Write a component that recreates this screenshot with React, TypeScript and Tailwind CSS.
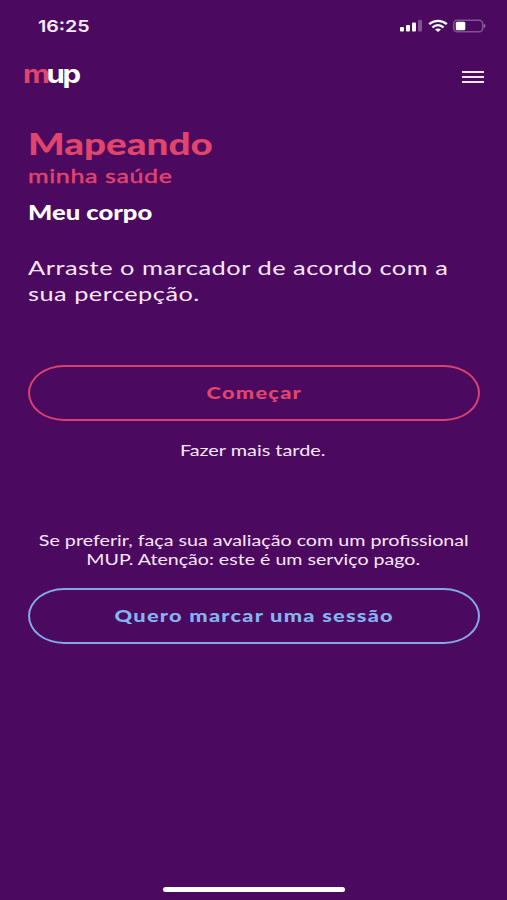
import type { ReactNode } from "react";
import clsx from "clsx";

type LineProps = { children: ReactNode; className?: string };

function Line({ children, className }: LineProps) {
  return <span className={clsx("block w-fit whitespace-nowrap", className)}>{children}</span>;
}

function StatusBar() {
  return (
    <div className="flex h-[52px] items-center justify-between pr-5 pl-[38px]">
      <Line className="origin-left scale-x-[1.19] font-['Inter'] text-[16.5px] font-semibold text-[#fbeafd]">16:25</Line>
      <svg width="88" height="14" viewBox="0 0 88 14">
        {/* sinal */}
        <g fill="#fff">
          <rect x="1" y="8" width="4" height="4.5" rx="1" />
          <rect x="7" y="6" width="4" height="6.5" rx="1" />
          <rect x="13" y="3.5" width="4" height="9" rx="1" />
          <rect x="19" y="1" width="4" height="11.5" rx="1" opacity="0.3" />
        </g>
        {/* wifi */}
        <g fill="none" stroke="#fff" strokeWidth="2.4">
          <path d="M30.2 5.2C35.4 .7 42.6 .7 47.8 5.2" />
          <path d="M33.4 8.5C36.7 5.4 41.3 5.4 44.6 8.5" />
        </g>
        <path d="M36 10.5c1.8-1.5 4.2-1.5 6 0l-3 2.5z" fill="#fff" />
        {/* bateria */}
        <rect x="54.7" y="1.2" width="29" height="11.6" rx="3.5" fill="none" stroke="#fff" strokeOpacity="0.3" strokeWidth="1.6" />
        <rect x="56.8" y="2.8" width="9.5" height="8.4" rx="1.5" fill="#fff" />
        <path d="M84.8 5c2.2.6 2.2 3.4 0 4z" fill="#fff" opacity="0.4" />
      </svg>
    </div>
  );
}

function Header() {
  return (
    <header className="flex h-[50px] items-center justify-between px-[23px]">
      <Line className="mb-[6px] origin-left scale-x-[1.18] font-['Inter'] text-[25px] leading-[30px] font-bold tracking-[-2px] text-white">
        <span className="tracking-[-3px] text-[#e2456c]">m</span>up
      </Line>
      <button aria-label="Menu" className="flex w-[22px] flex-col gap-[3px]">
        <span className="h-[2px] bg-[#f6e3fa]" />
        <span className="h-[2px] bg-[#f6e3fa]" />
        <span className="h-[2px] bg-[#f6e3fa]" />
      </button>
    </header>
  );
}

export default function App() {
  return (
    <div className="flex h-[900px] w-[507px] flex-col overflow-hidden bg-[#4b0a60] font-['Lato',sans-serif] text-[#f8e6fb]">
      <StatusBar />
      <Header />
      <main className="flex flex-col px-7 pt-[23px]">
        <h1 className="text-[#e2456c]">
          <Line className="origin-left scale-x-[1.245] text-[31px] leading-9 font-black">Mapeando</Line>
          <Line className="origin-left scale-x-[1.25] text-[20px] leading-7 tracking-[0.5px] [-webkit-text-stroke:0.4px_#e2456c]">
            minha saúde
          </Line>
        </h1>
        <h2 className="mt-[7px] text-white">
          <Line className="origin-left scale-x-[1.28] text-[20px] leading-8 font-black">Meu corpo</Line>
        </h2>
        <p className="mt-[26px] text-[20px] leading-[26px] tracking-[0.4px]">
          <Line className="origin-left scale-x-[1.27]">Arraste o marcador de acordo com a</Line>
          <Line className="origin-left scale-x-[1.265]">sua percepção.</Line>
        </p>
        <button className="mt-[59px] mr-[-1px] flex h-14 items-center justify-center rounded-[36px/28px] border-2 border-[#d9426e] pt-px text-[#e2456c]">
          <Line className="scale-x-[1.245] text-[17.5px] font-black tracking-[1px]">Começar</Line>
        </button>
        <button className="mt-[17px] flex h-6 items-center justify-center pr-0.5 text-[16px]">
          <Line className="scale-x-[1.24]">Fazer mais tarde.</Line>
        </button>
        <p className="mt-[68px] flex flex-col items-center text-[16px] leading-[19px]">
          <Line className="scale-x-[1.23]">Se preferir, faça sua avaliação com um profissional</Line>
          <Line className="scale-x-[1.225]">MUP. Atenção: este é um serviço pago.</Line>
        </p>
        <button className="mt-5 mr-[-1px] flex h-14 items-center justify-center rounded-[36px/28px] border-2 border-[#84a9e8] pt-px text-[#84b4f0]">
          <Line className="scale-x-[1.245] text-[17.5px] font-black tracking-[1px]">Quero marcar uma sessão</Line>
        </button>
      </main>
      <div className="mt-auto mb-2 ml-[163px] h-[5px] w-[182px] rounded-full bg-white" />
    </div>
  );
}
